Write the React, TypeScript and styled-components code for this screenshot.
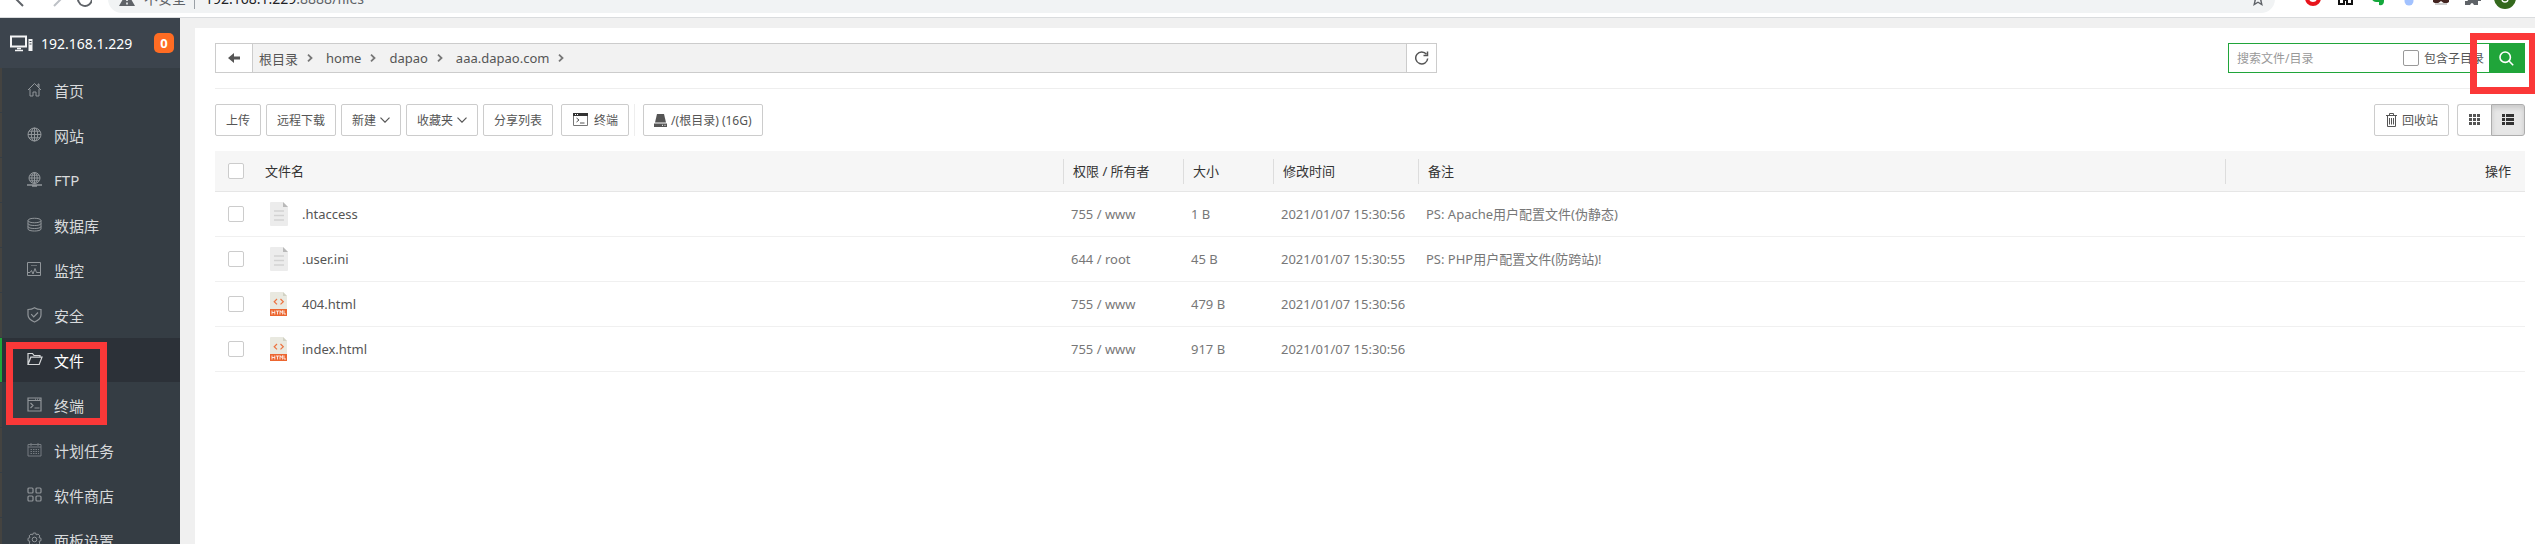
import React from 'react';
import styled, { createGlobalStyle, css } from 'styled-components';

const Global = createGlobalStyle`
  * { box-sizing: border-box; }
  html, body { margin: 0; height: 100%; overflow: hidden; }
  #root { height: 100%; }
  body, button, input, table {
    font-family: 'Noto Sans', 'Noto Sans CJK SC', sans-serif;
    font-size: 13px;
    color: #555;
  }
  svg { display: block; flex: none; }
`;

const Screen = styled.div`
  position: relative;
  height: 100vh;
  display: flex;
  flex-direction: column;
  overflow: hidden;
  background: #f0f0f0;
`;

/* ---- browser chrome, scrolled almost out of view ---- */
const Chrome = styled.header`
  height: 18px;
  flex: none;
  display: flex;
  align-items: flex-end;
  gap: 16px;
  padding: 0 18px 4px 12px;
  background: #fff;
  border-bottom: 1px solid #dadcde;
  overflow: hidden;
`;
const NavIcons = styled.div`
  display: flex;
  gap: 0;
  width: 80px;
  height: 28px;
`;
const AddressBar = styled.div`
  flex: 1;
  height: 28px;
  display: flex;
  align-items: center;
  padding: 0 10px 0 11px;
  border-radius: 14px;
  background: #f1f3f4;
  font-size: 14px;
  line-height: 20px;
  color: #5f6368;
`;
const Insecure = styled.span`
  margin-left: 9px;
  padding-right: 8px;
  border-right: 1px solid #9aa0a6;
`;
const Url = styled.span`
  flex: 1;
  margin-left: 10px;
  b { font-weight: 400; color: #202124; }
`;
const Extensions = styled.div`
  display: flex;
  height: 28px;
  svg { overflow: visible; }
`;

const Body = styled.div`
  flex: 1;
  display: flex;
  min-height: 0;
`;

/* ---- sidebar ---- */
const Sidebar = styled.nav`
  width: 180px;
  flex: none;
  background: #353d44;
  overflow: hidden;
`;
const Host = styled.div`
  height: 50px;
  display: flex;
  align-items: center;
  padding: 0 6px 0 10px;
  background: #3c444d;
  color: #fff;
  font-size: 14px;
  svg { margin-right: 8px; }
`;
const Badge = styled.span`
  width: 20px;
  height: 20px;
  margin-left: auto;
  border-radius: 5px;
  background: #ff6c23;
  font-size: 13px;
  font-weight: 700;
  line-height: 20px;
  text-align: center;
`;
const MenuLink = styled.a<{ $active?: boolean }>`
  height: 44px;
  margin-bottom: 1px;
  display: flex;
  align-items: center;
  gap: 11px;
  padding-left: 25px;
  border-left: 2px solid #444340;
  color: #d8dadc;
  font-size: 15px;
  text-decoration: none;
  svg { color: #91969a; }
  ${p => p.$active && css`
    border-left-color: #20a53a;
    background: #2c3138;
    color: #fff;
    svg { color: #d5d7d9; }
  `}
`;

/* ---- content ---- */
const Content = styled.main`
  flex: 1;
  min-width: 0;
  margin: 10px 0 0 15px;
  padding: 0 10px 0 20px;
  background: #fff;
`;
const PathRow = styled.div`
  height: 61px;
  display: flex;
  justify-content: space-between;
  align-items: flex-start;
  padding-top: 15px;
  border-bottom: 1px solid #eee;
`;
const PathBar = styled.div`
  width: 1222px;
  height: 30px;
  display: flex;
  border: 1px solid #ccc;
  background: #f2f2f2;
`;
const PathButton = styled.button<{ $side: 'left' | 'right' }>`
  width: ${p => (p.$side === 'left' ? 37 : 30)}px;
  display: flex;
  align-items: center;
  justify-content: center;
  padding: 0;
  border: 0;
  border-${p => (p.$side === 'left' ? 'right' : 'left')}: 1px solid #ccc;
  background: #fff;
`;
const Crumbs = styled.div`
  flex: 1;
  display: flex;
  align-items: center;
  padding-left: 6px;
`;
const Crumb = styled.a`
  display: flex;
  align-items: center;
  gap: 9px;
  margin-right: 13px;
  color: #555;
  text-decoration: none;
`;
const Search = styled.form`
  width: 297px;
  height: 30px;
  display: flex;
  align-items: center;
  border: 1px solid #20a53a;
  font-size: 12px;
`;
const SearchInput = styled.input`
  flex: 1;
  min-width: 0;
  padding: 0 0 0 8px;
  border: 0;
  outline: 0;
  background: transparent;
  font-size: 12px;
  &::placeholder { color: #999; opacity: 1; }
`;
const SubdirLabel = styled.label`
  display: flex;
  align-items: center;
  gap: 5px;
  margin-right: 5px;
  font-size: 12px;
`;
const SearchButton = styled.button`
  width: 35px;
  align-self: stretch;
  display: flex;
  align-items: center;
  justify-content: center;
  padding: 0;
  border: 0;
  background: #20a53a;
  color: #fff;
`;
const Check = styled.input.attrs({ type: 'checkbox' })<{ $tone?: string }>`
  appearance: none;
  display: block;
  width: 16px;
  height: 16px;
  margin: 0;
  border: 1px solid ${p => p.$tone ?? '#ccc'};
  border-radius: 2px;
  background: #fff;
`;

const Toolbar = styled.div`
  display: flex;
  gap: 5px;
  padding: 15px 0;
`;
const ToolButton = styled.button<{ $gapAfter?: boolean }>`
  height: 32px;
  display: flex;
  align-items: center;
  gap: 4px;
  padding: 0 10px;
  margin-right: ${p => (p.$gapAfter ? 3 : 0)}px;
  border: 1px solid #ccc;
  border-radius: 2px;
  background: #fff;
  font-size: 12px;
  white-space: nowrap;
`;
const Separator = styled.span`
  width: 1px;
  margin-right: 3px;
  background: #eee;
`;
const Spacer = styled.span`
  flex: 1;
`;
const ViewSwitch = styled.div`
  display: flex;
`;
const ViewButton = styled.button<{ $on?: boolean }>`
  width: 34px;
  height: 32px;
  display: flex;
  align-items: center;
  justify-content: center;
  padding: 0;
  border: 1px solid ${p => (p.$on ? '#adadad' : '#ccc')};
  border-radius: ${p => (p.$on ? '0 3px 3px 0' : '3px 0 0 3px')};
  border-right-width: ${p => (p.$on ? 1 : 0)}px;
  background: ${p => (p.$on ? '#e6e6e6' : '#fff')};
  box-shadow: ${p => (p.$on ? 'inset 0 3px 5px rgba(0, 0, 0, 0.125)' : 'none')};
  color: ${p => (p.$on ? '#333' : '#555')};
`;

const Files = styled.table`
  width: 100%;
  table-layout: fixed;
  border-collapse: separate;
  border-spacing: 0;
  line-height: 18px;
`;
const Col = styled.col<{ $w?: number }>`
  width: ${p => (p.$w ? `${p.$w}px` : 'auto')};
`;
const Th = styled.th<{ $ruled?: boolean; $right?: boolean }>`
  height: 41px;
  padding: 0 ${p => (p.$right ? 14 : 0)}px 0 0;
  border-bottom: 1px solid #e6e6e6;
  background: #f6f6f6;
  color: #333;
  font-weight: 400;
  text-align: ${p => (p.$right ? 'right' : 'left')};
  ${p => p.$ruled && css`
    > span {
      display: block;
      height: 25px;
      padding-left: 9px;
      border-left: 1px solid #ddd;
      line-height: 25px;
    }
  `}
`;
const CheckTh = styled(Th)`
  padding-left: 13px;
`;
const Td = styled.td<{ $check?: boolean; $dark?: boolean }>`
  height: 45px;
  padding: 0 0 0 ${p => (p.$check ? 13 : 8)}px;
  border-bottom: 1px solid #f0f0f0;
  color: ${p => (p.$dark ? '#555' : '#777')};
  white-space: nowrap;
`;
const FileName = styled.a`
  display: flex;
  align-items: center;
  gap: 14px;
  margin-left: -3px;
  color: #555;
  text-decoration: none;
`;

const Highlight = styled.div<{ $at: 'menu' | 'search' }>`
  position: absolute;
  border: 7px solid #fb3838;
  pointer-events: none;
  ${p => (p.$at === 'menu'
    ? css`left: 6px; top: 342px; width: 101px; height: 83px;`
    : css`right: 0; top: 33px; width: 65px; height: 61px; border-right-width: 6px;`)}
`;

/* ---- drawings ---- */
const line = { fill: 'none', stroke: 'currentColor', strokeWidth: 1 } as const;

const menuIcons: Record<string, React.ReactNode> = {
  home: <path d="M1 8 7.500 1.500 14 8M3 7v7h3v-4h3v4h3V7M11 4.500V2h1v3.500" />,
  globe: <><circle cx="7.500" cy="7.500" r="6.500" /><ellipse cx="7.500" cy="7.500" rx="3.200" ry="6.500" /><path d="M7.500 1v13M1 7.500h13M2 4.200h11M2 10.800h11" /></>,
  ftp: <><circle cx="7.500" cy="6" r="5.500" /><ellipse cx="7.500" cy="6" rx="2.700" ry="5.500" /><path d="M7.500.5v11M2 6h11M3 3.200h9M3 8.800h9" /><path d="M0 13h15M5 14h5" strokeWidth="1.500" /></>,
  database: <path d="M1 3.500C1 .5 14 .5 14 3.500S1 6.500 1 3.500v8.500c0 2.700 13 2.700 13 0V3.500M1 6.500c0 2.700 13 2.700 13 0M1 9.500c0 2.700 13 2.700 13 0" />,
  monitor: <><path d="M.5.5h13v13H.5zM.5 10.500h2.500l1.500-2 1.500 3.500 2-5.500 1.500 4h4" /><path d="M4 3.500h6" opacity=".6" /></>,
  shield: <path d="M7.500.7C5.500 2 3.500 2.500 1 2.500V8c0 3.500 3 5.500 6.500 7C11 13.500 14 11.500 14 8V2.500C11.500 2.500 9.500 2 7.500.7zM4.200 7.200l2.500 2.600L11 5.500" strokeWidth="1.200" />,
  folder: <path d="M1 12.500V1.500h4.500l1.500 2h6v2M1 12.500 3.800 5.200H15L12.200 12.500z" strokeWidth="1.200" />,
  terminal: <><path d="M1 1h13v13H1zM1 3.500h13M3.500 6l2.500 2.500L3.500 11M7.500 11h5" strokeWidth="1.200" /><path d="M8 2.200h5" strokeDasharray="1 1" /></>,
  calendar: <g opacity=".7"><path d="M1 2.500h13V14H1zM1 5h13M4 1v3M11 1v3" /><path d="M3.500 7.500h8.500M3.500 9.500h8.500M3.500 11.500h8.500" strokeDasharray="1.500 1" /></g>,
  apps: <g strokeWidth="1.200"><rect x="1" y="1" width="5" height="5" rx="1" /><rect x="9" y="1" width="5" height="5" rx="1" /><rect x="1" y="9" width="5" height="5" rx="1" /><rect x="9" y="9" width="5" height="5" rx="1" /></g>,
  gear: <><circle cx="7.500" cy="7.500" r="2.300" /><path d="M6.300 1h2.400l.5 1.800 1.900-.7 1.700 1.700-.8 1.800 2 .7v2.400l-2 .6.8 1.900-1.700 1.700-1.900-.8-.5 1.900H6.300l-.6-1.900-1.800.8-1.700-1.700.7-1.900L1 8.700V6.300l1.900-.7-.7-1.800 1.700-1.700 1.800.7z" /></>,
};
const MenuIcon = ({ name }: { name: string }) => (
  <svg width="16" height="16" viewBox="0 0 16 16" {...line}>{menuIcons[name]}</svg>
);
const Chevron = () => (
  <svg width="6" height="8" viewBox="0 0 6 8" {...line} stroke="#777" strokeWidth="1.800"><path d="M1 .7 4.500 4 1 7.300" /></svg>
);
const DownArrow = () => (
  <svg width="10" height="6" viewBox="0 0 10 6" {...line} strokeWidth="1.200"><path d="M.5.7 5 5.200 9.500.7" /></svg>
);
const TextFileIcon = () => (
  <svg width="18" height="24" viewBox="0 0 18 24">
    <path d="M1 0h12l5 5v18a1 1 0 0 1-1 1H1a1 1 0 0 1-1-1V1a1 1 0 0 1 1-1z" fill="#ececec" />
    <path d="M13 0v5h5z" fill="#b9b9b9" />
    <path d="M4 9h10M4 13.500h10M4 18h10" stroke="#d2d2d2" strokeWidth="1.500" />
  </svg>
);
const HtmlFileIcon = () => (
  <svg width="18" height="24" viewBox="0 0 18 24">
    <path d="M1 0h12l4 4v13H0V1a1 1 0 0 1 1-1z" fill="#e9e9e0" />
    <path d="M13 0v4h4z" fill="#d2d2c4" />
    <path d="M7 7 4.200 9.700 7 12.400M10.500 7l2.800 2.700-2.800 2.700" fill="none" stroke="#ec7340" strokeWidth="1.200" />
    <path d="M0 17h17v7H0z" fill="#ec6630" />
    <path d="M2 18.500v4M4.800 18.500v4M2 20.500h2.800M6 19h3M7.500 19v3.500M10 22.500v-4l1.300 2 1.300-2v4M14 18.500V22h2" fill="none" stroke="#fff" strokeWidth=".8" />
  </svg>
);

const menu: [string, string][] = [
  ['home', '首页'], ['globe', '网站'], ['ftp', 'FTP'], ['database', '数据库'], ['monitor', '监控'], ['shield', '安全'],
  ['folder', '文件'], ['terminal', '终端'], ['calendar', '计划任务'], ['apps', '软件商店'], ['gear', '面板设置'],
];
const files = [
  { name: '.htaccess', owner: '755 / www', size: '1 B', time: '2021/01/07 15:30:56', note: 'PS: Apache用户配置文件(伪静态)' },
  { name: '.user.ini', owner: '644 / root', size: '45 B', time: '2021/01/07 15:30:55', note: 'PS: PHP用户配置文件(防跨站)!' },
  { name: '404.html', owner: '755 / www', size: '479 B', time: '2021/01/07 15:30:56', note: '' },
  { name: 'index.html', owner: '755 / www', size: '917 B', time: '2021/01/07 15:30:56', note: '' },
];

const BrowserBar = () => (
  <Chrome>
    <NavIcons>
      <svg width="80" height="28" viewBox="0 0 80 28" fill="none" strokeWidth="2">
        <path d="M11 6 3 14l8 8" transform="translate(0 -1)" stroke="#5f6368" />
        <path d="M42 5l8 8-8 8" stroke="#bdc1c6" />
        <path d="M81 12a7 7 0 1 1-2-5" transform="translate(-1 2)" stroke="#5f6368" />
      </svg>
    </NavIcons>
    <AddressBar>
      <svg width="16" height="14" viewBox="0 0 16 14"><path d="M8 0l8 14H0z" fill="#5f6368" /><path d="M8 5v4M8 10.500v2" stroke="#f1f3f4" strokeWidth="1.600" /></svg>
      <Insecure>不安全</Insecure>
      <Url><b>192.168.1.229</b>:8888/files</Url>
      <svg width="14" height="14" viewBox="0 0 14 14" fill="none" stroke="#5f6368" strokeWidth="1.400"><path d="M7 1l1.800 4 4.200.4-3.200 2.800 1 4.300L7 10.200l-3.800 2.300 1-4.300L1 5.400 5.200 5z" /></svg>
    </AddressBar>
    <Extensions>
      <svg width="226" height="28" viewBox="0 0 226 28">
        <circle cx="22" cy="13" r="6" fill="none" stroke="#e8141c" strokeWidth="4" />
        <path d="M48 13v6h5v-4h3v4h5v-6" fill="none" stroke="#111" strokeWidth="2" />
        <path d="M80 13h13v3q0 5-5 4v-3h-3q-3 0-5-4z" fill="#14a83c" />
        <circle cx="118" cy="16" r="4.500" fill="#a2c2ff" />
        <path d="M142 13h16v4q-4 3-8-1-4 4-8 1z" fill="#42231f" /><path d="M144 19h12" stroke="#ccc" strokeWidth="2" />
        <path d="M175 12h12v3h3v-3 4h-3v4h-4q-2-4-4 0h-5v-4h3z" fill="#5f6368" />
        <circle cx="214" cy="13" r="11" fill="#34691d" /><circle cx="214" cy="14" r="3" fill="none" stroke="#fff" strokeWidth="1.300" />
      </svg>
    </Extensions>
  </Chrome>
);

export default function App() {
  return (
    <Screen>
      <Global />
      <BrowserBar />
      <Body>
        <Sidebar>
          <Host>
            <svg width="23" height="17" viewBox="0 0 23 17" fill="none" stroke="#f3f4f5">
              <path d="M1 1.500h15v10H1z" strokeWidth="2" /><path d="M5 15.500h8M7 13.500h4" strokeWidth="1.500" />
              <path d="M18.500 4h4v12h-4z" fill="#f3f4f5" stroke="none" /><path d="M19.500 6.500h2M19.500 9h2" stroke="#3c444d" />
            </svg>
            192.168.1.229
            <Badge>0</Badge>
          </Host>
          {menu.map(([icon, label]) => (
            <MenuLink key={icon} href="#" $active={icon === 'folder'}><MenuIcon name={icon} />{label}</MenuLink>
          ))}
        </Sidebar>
        <Content>
          <PathRow>
            <PathBar>
              <PathButton $side="left" aria-label="返回">
                <svg width="12" height="10" viewBox="0 0 12 10"><path d="M0 5 6 0v3.500h6v3H6V10z" fill="#555" /></svg>
              </PathButton>
              <Crumbs>
                {['根目录', 'home', 'dapao', 'aaa.dapao.com'].map(c => <Crumb key={c} href="#">{c}<Chevron /></Crumb>)}
              </Crumbs>
              <PathButton $side="right" aria-label="刷新">
                <svg width="14" height="14" viewBox="0 0 14 14" fill="none" stroke="#555" strokeWidth="1.500"><path d="M12.700 7.500A6 6 0 1 1 11.500 3.300" /><path d="M12.500.5v4h-4" /></svg>
              </PathButton>
            </PathBar>
            <Search onSubmit={e => e.preventDefault()}>
              <SearchInput placeholder="搜索文件/目录" aria-label="搜索文件/目录" />
              <SubdirLabel><Check $tone="#999" />包含子目录</SubdirLabel>
              <SearchButton aria-label="搜索">
                <svg width="15" height="15" viewBox="0 0 15 15" {...line} strokeWidth="1.600"><circle cx="6.200" cy="6.200" r="5.200" /><path d="M10 10l4.200 4.200" /></svg>
              </SearchButton>
            </Search>
          </PathRow>
          <Toolbar>
            <ToolButton>上传</ToolButton>
            <ToolButton>远程下载</ToolButton>
            <ToolButton>新建<DownArrow /></ToolButton>
            <ToolButton>收藏夹<DownArrow /></ToolButton>
            <ToolButton $gapAfter>分享列表</ToolButton>
            <ToolButton>
              <svg width="18" height="14" viewBox="0 0 18 14"><path d="M1.500.5h14v12h-14z" fill="#fff" stroke="#777" /><path d="M1 0h15v3H1z" fill="#333" /><path d="M3 1.500h4" stroke="#fff" strokeDasharray="1 1" /><path d="M4.500 5l2.500 2-2.500 2M8 10h4.500" fill="none" stroke="#555" /></svg>
              终端
            </ToolButton>
            <Separator />
            <ToolButton>
              <svg width="13" height="13" viewBox="0 0 13 13"><path d="M3 0h7l2 8.500H1z" fill="#555" /><path d="M0 9.500h13V13H0z" fill="#555" /><path d="M8 11.300h1M10.500 11.300h1" stroke="#fff" /></svg>
              /(根目录) (16G)
            </ToolButton>
            <Spacer />
            <ToolButton $gapAfter>
              <svg width="13" height="14" viewBox="0 0 13 14" {...line}><path d="M1 2.500h11M4.500 2.500v-2h4v2M2.500 2.500v11h8v-11M4.500 5v6.500M6.500 5v6.500M8.500 5v6.500" /></svg>
              回收站
            </ToolButton>
            <ViewSwitch>
              <ViewButton aria-label="图标视图">
                <svg width="12" height="12" viewBox="0 0 12 12" fill="currentColor">{[0, 4, 8].map(y => [0, 4, 8].map(x => <rect key={`${x}-${y}`} x={x} y={y} width="3" height="3" />))}</svg>
              </ViewButton>
              <ViewButton $on aria-label="列表视图">
                <svg width="12" height="12" viewBox="0 0 12 12" fill="currentColor">{[0, 4, 8].map(y => <path key={y} d={`M0 ${y}h3v3H0zM4 ${y}h8v3H4z`} />)}</svg>
              </ViewButton>
            </ViewSwitch>
          </Toolbar>
          <Files>
            <colgroup>
              <Col $w={50} /><Col $w={798} /><Col $w={120} /><Col $w={90} /><Col $w={145} /><Col /><Col $w={300} />
            </colgroup>
            <thead>
              <tr>
                <CheckTh><Check aria-label="全选" /></CheckTh>
                <Th>文件名</Th>
                <Th $ruled><span>权限 / 所有者</span></Th>
                <Th $ruled><span>大小</span></Th>
                <Th $ruled><span>修改时间</span></Th>
                <Th $ruled><span>备注</span></Th>
                <Th $ruled $right><span>操作</span></Th>
              </tr>
            </thead>
            <tbody>
              {files.map(f => (
                <tr key={f.name}>
                  <Td $check><Check aria-label={f.name} /></Td>
                  <Td><FileName href="#">{f.name.endsWith('.html') ? <HtmlFileIcon /> : <TextFileIcon />}{f.name}</FileName></Td>
                  <Td>{f.owner}</Td>
                  <Td>{f.size}</Td>
                  <Td>{f.time}</Td>
                  <Td>{f.note}</Td>
                  <Td />
                </tr>
              ))}
            </tbody>
          </Files>
        </Content>
      </Body>
      <Highlight $at="menu" />
      <Highlight $at="search" />
    </Screen>
  );
}
